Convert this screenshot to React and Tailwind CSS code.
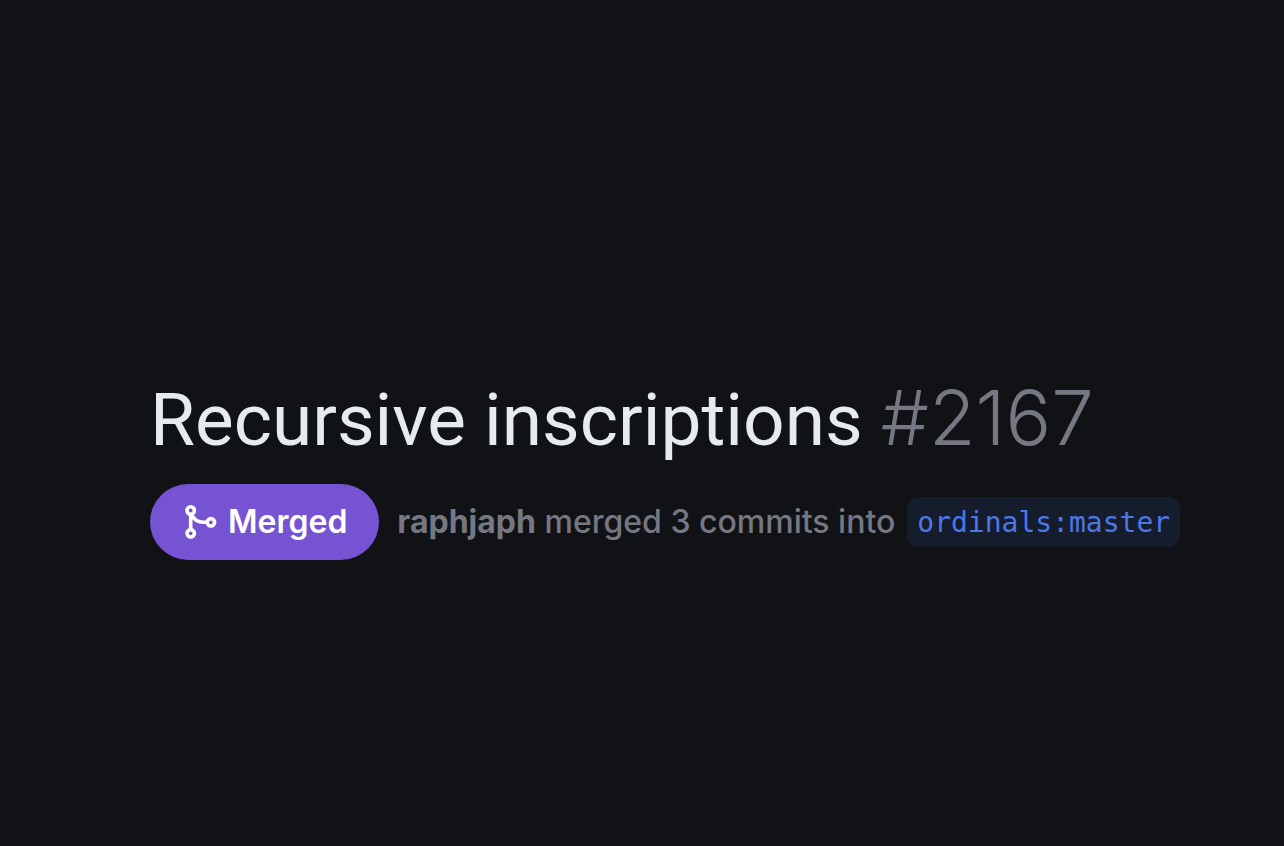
import React from 'react';

function MergeIcon() {
  return (
    <svg
      viewBox="0 0 38 38"
      className="size-[38px]"
      fill="none"
      stroke="currentColor"
      strokeWidth="3.6"
      aria-hidden="true"
    >
      <circle cx="8.7" cy="7.5" r="3.7" />
      <circle cx="8.7" cy="30.3" r="3.7" />
      <circle cx="28.9" cy="19.3" r="3.7" />
      <path d="M8.7 11V26.6M9.2 11C11.5 16 16 19.3 21.5 19.3H25.1" />
    </svg>
  );
}

function StateBadge() {
  return (
    <span className="inline-flex h-[76px] shrink-0 items-center gap-2 rounded-full bg-[#7553d3] px-8 text-[32px] leading-10 font-semibold text-white">
      <MergeIcon />
      Merged
    </span>
  );
}

function App() {
  return (
    <main className="flex min-h-screen flex-col bg-[#111216] px-[150px] pt-[369px] font-['Inter',sans-serif]">
      <h1 className="text-[73px] leading-[96px] whitespace-nowrap text-[#e6ebf2]">
        <span className="font-['Roboto',sans-serif]">Recursive inscriptions </span>
        <span className="text-[76px] font-light text-[#757882]">#2167</span>
      </h1>
      <div className="mt-4 flex items-center gap-[18px] whitespace-nowrap">
        <StateBadge />
        <p className="flex items-center gap-3 text-[32px] leading-10 font-medium text-[#757882]">
          <span>
            <a href="#raphjaph" className="font-bold">raphjaph</a> merged 3 commits into
          </span>
          <a
            href="#master"
            className="rounded-xl bg-[#151c2b] px-2.5 pt-1.5 pb-1 font-['DejaVu_Sans_Mono',monospace] text-[28px] font-normal text-[#4b78e6]"
          >
            ordinals:master
          </a>
        </p>
      </div>
    </main>
  );
}

export default App;
